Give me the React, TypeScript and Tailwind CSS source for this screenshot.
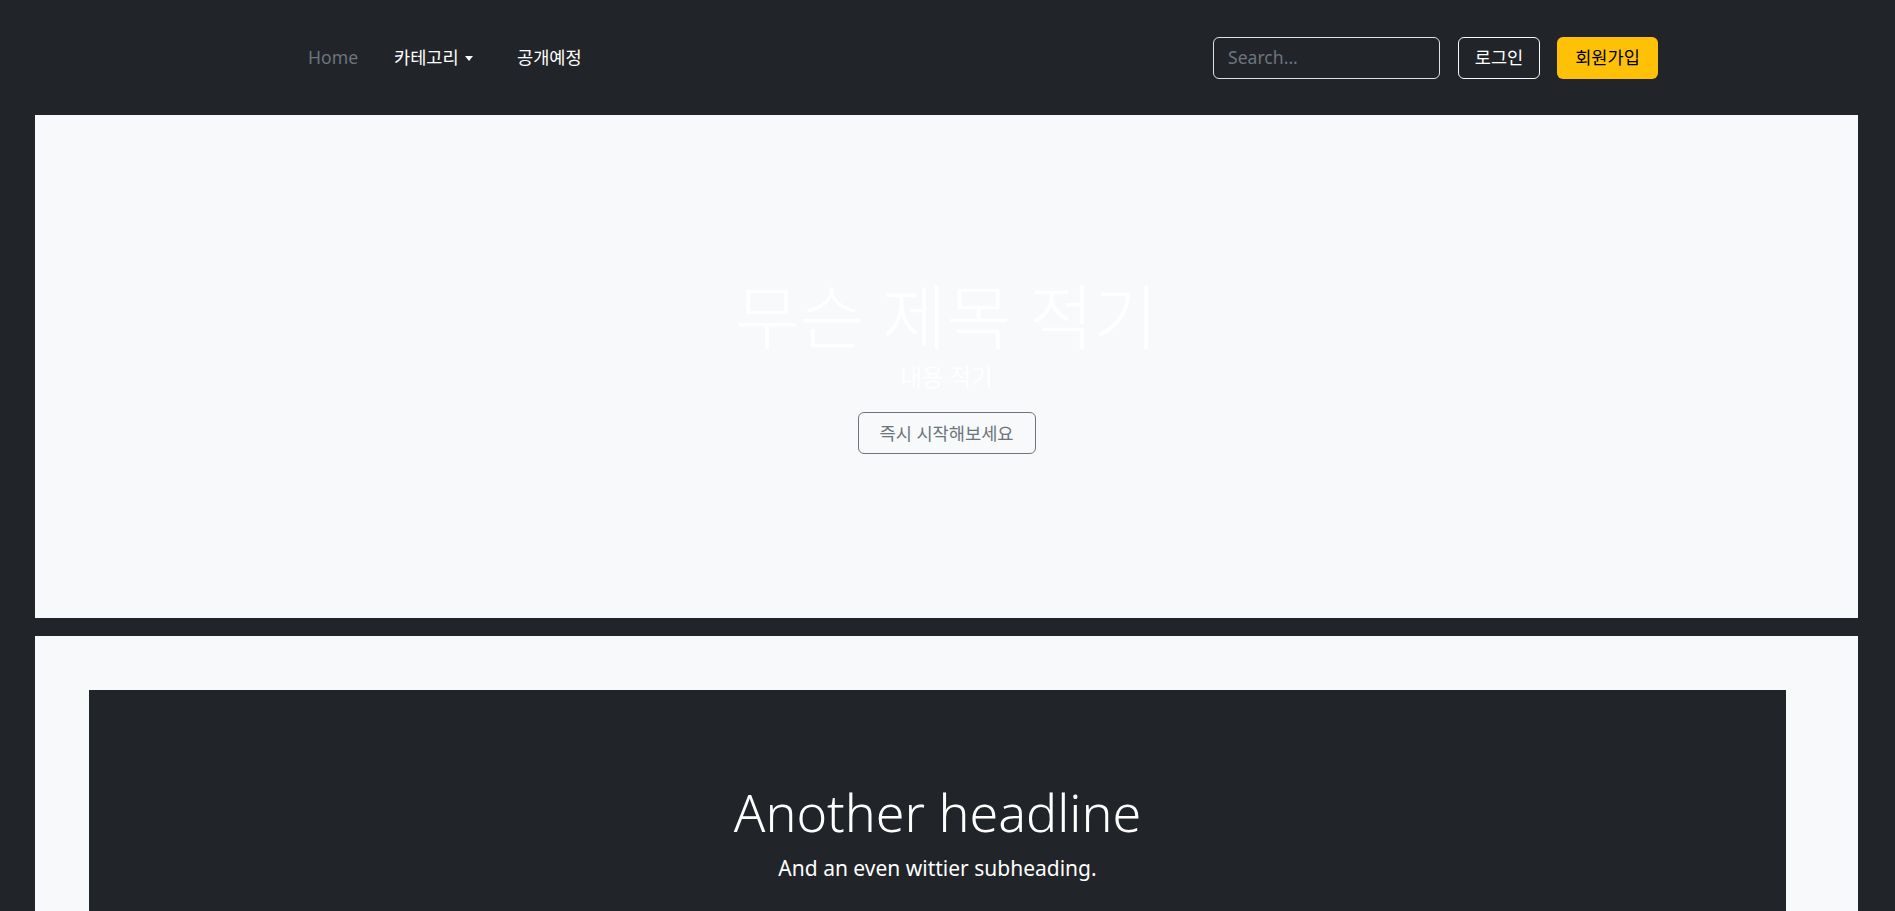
import React from "react";

const latin = '"Noto Sans", "Noto Sans CJK KR", sans-serif';

export default function App() {
  return (
    <div
      className="min-h-[911px] bg-[#212529] overflow-hidden"
      style={{ fontFamily: latin }}
    >
      {/* Navbar */}
      <header className="h-[115px] flex items-center pl-[308px] pr-[237px]">
        <nav className="flex items-center text-[17.6px] leading-none">
          <a className="w-[86px] text-[#6c757d]">Home</a>
          <a className="w-[123px] text-white flex items-center">
            <span>카테고리</span>
            <span className="ml-[6px] mt-[2px] w-0 h-0 border-l-[4.5px] border-r-[4.5px] border-t-[5px] border-l-transparent border-r-transparent border-t-white" />
          </a>
          <a className="text-white">공개예정</a>
        </nav>
        <div className="ml-auto flex items-center">
          <div className="w-[227px] h-[42px] rounded-[6px] border border-[#dee2e6] flex items-center pl-[14px] text-[17.6px] text-[#6c757d]">
            Search...
          </div>
          <button className="ml-[18px] w-[82px] h-[42px] rounded-[6px] border border-[#f8f9fa] text-white text-[17.6px] flex items-center justify-center">
            로그인
          </button>
          <button className="ml-[17px] w-[101px] h-[42px] rounded-[6px] bg-[#ffc107] text-[#000] text-[17.6px] flex items-center justify-center">
            회원가입
          </button>
        </div>
      </header>

      {/* Hero */}
      <section className="ml-[35px] mr-[37px] h-[503px] bg-[#f8f9fa] flex flex-col items-center pt-[167px]">
        <h1 className="text-white text-[70px] font-light leading-none">무슨 제목 적기</h1>
        <p className="text-white text-[23.5px] leading-[1.2] mt-[11px]">내용 적기</p>
        <button className="mt-[21px] w-[178px] h-[42px] rounded-[6px] border border-[#6c757d] text-[#6c757d] text-[17.6px] flex items-center justify-center">
          즉시 시작해보세요
        </button>
      </section>

      {/* Second section */}
      <section className="mt-[18px] ml-[35px] mr-[37px] bg-[#f8f9fa] pt-[54px] pl-[54px] pr-[72px]">
        <div className="bg-[#212529] h-[400px] flex flex-col items-center pt-[91px]">
          <h2 className="text-white text-[52px] font-light leading-[1.2]">Another headline</h2>
          <p className="text-white text-[21px] leading-[1.5] mt-[10px]">And an even wittier subheading.</p>
        </div>
      </section>
    </div>
  );
}
